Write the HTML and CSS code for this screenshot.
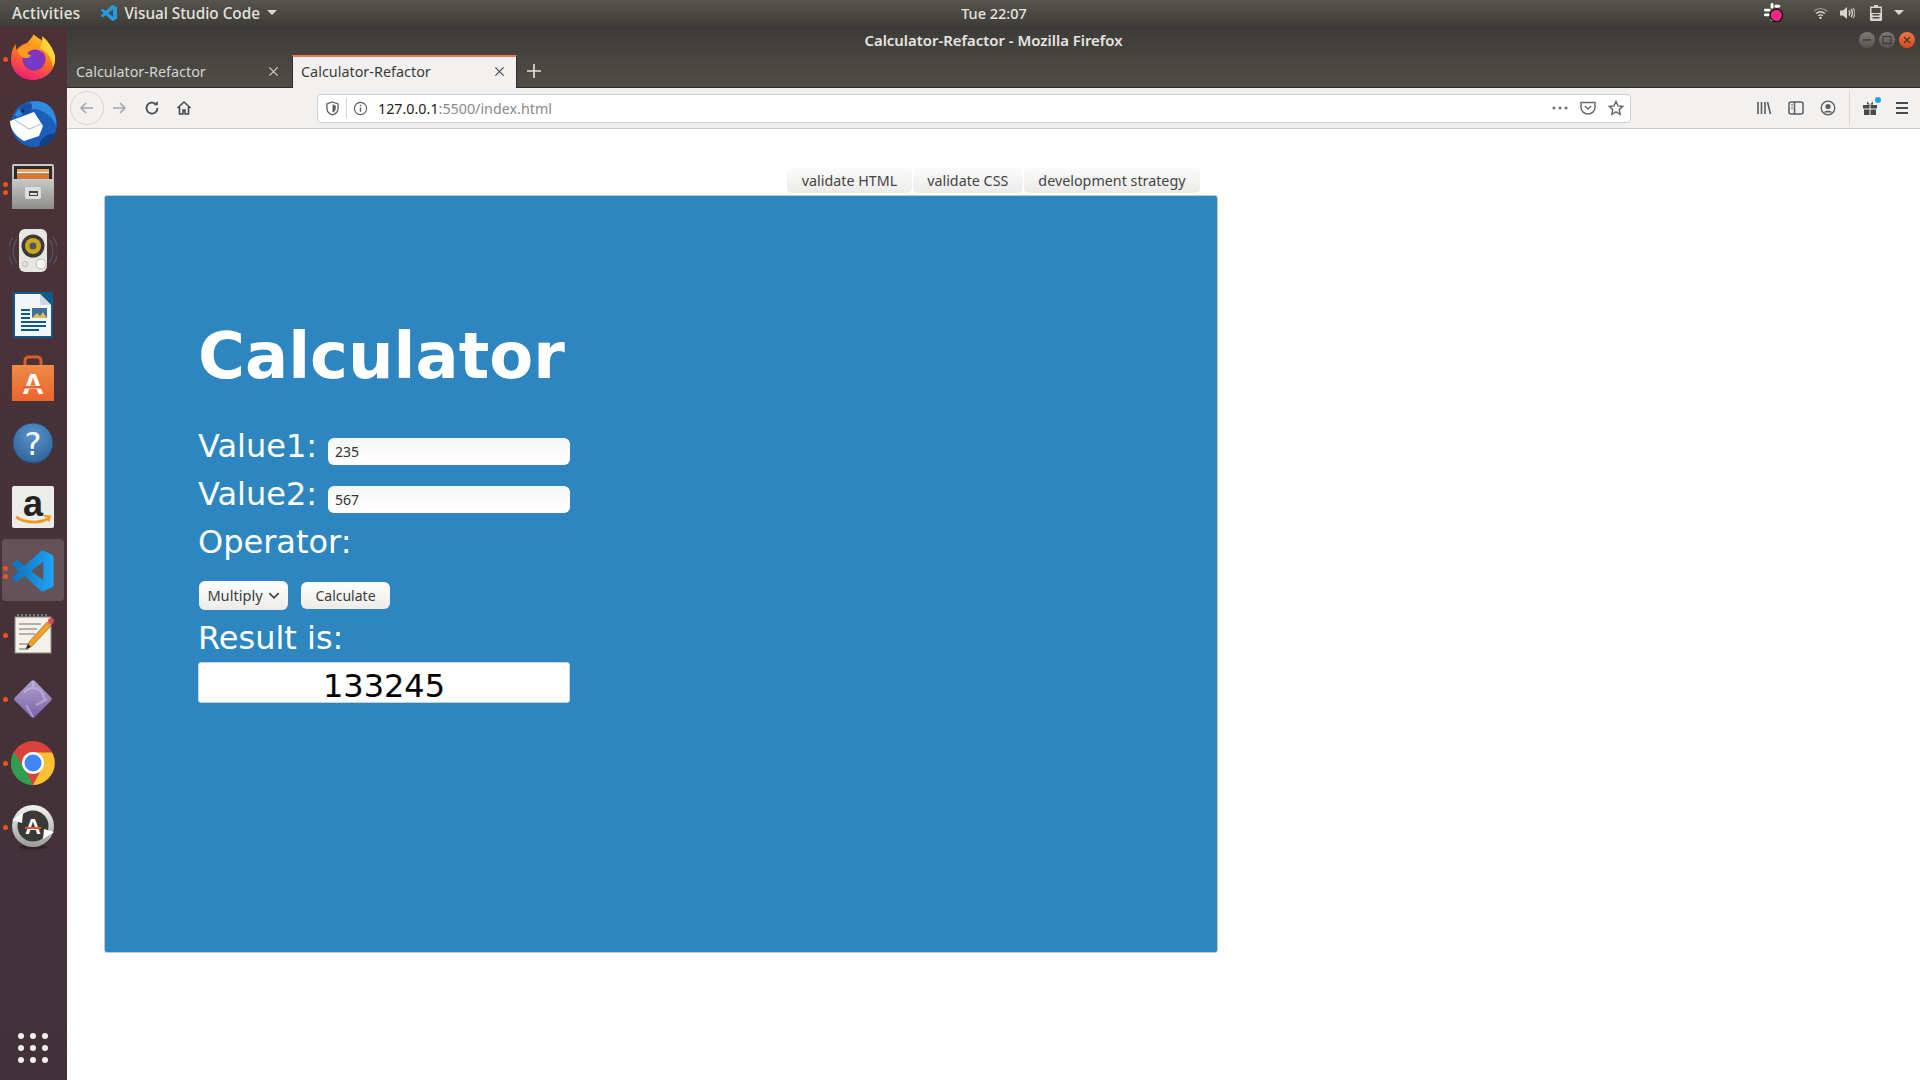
FILE: index.html
```html
<!DOCTYPE html>
<html lang="en">
<head>
<meta charset="utf-8">
<title>Calculator-Refactor - Mozilla Firefox</title>
<link rel="stylesheet" href="styles.css">
</head>
<body>
<svg class="defs" width="0" height="0" aria-hidden="true">
  <defs>
    <path id="vsc" d="M23.15 2.587L18.21.21a1.494 1.494 0 0 0-1.705.29l-9.46 8.63-4.12-3.128a.999.999 0 0 0-1.276.057L.327 7.261A1 1 0 0 0 .326 8.74L3.899 12 .326 15.26a1 1 0 0 0 .001 1.479L1.65 17.94a.999.999 0 0 0 1.276.057l4.12-3.128 9.46 8.63a1.492 1.492 0 0 0 1.704.29l4.942-2.377A1.5 1.5 0 0 0 24 20.06V3.939a1.5 1.5 0 0 0-.85-1.352zm-5.146 14.861L10.826 12l7.178-5.448v10.896z"/>
    <linearGradient id="ffg" x1="0.7" y1="0" x2="0.3" y2="1"><stop offset="0" stop-color="#ffc627"/><stop offset=".45" stop-color="#ff7a1a"/><stop offset="1" stop-color="#f0167c"/></linearGradient>
    <radialGradient id="ffp" cx=".45" cy=".6" r=".6"><stop offset="0" stop-color="#6a3fd0"/><stop offset="1" stop-color="#8f2fb5"/></radialGradient>
    <linearGradient id="grey" x1="0" y1="0" x2="0" y2="1"><stop offset="0" stop-color="#c9c9c7"/><stop offset="1" stop-color="#8d8d8b"/></linearGradient>
    <linearGradient id="bag" x1="0" y1="0" x2="0" y2="1"><stop offset="0" stop-color="#ef8a47"/><stop offset="1" stop-color="#e9652c"/></linearGradient>
    <radialGradient id="help" cx=".5" cy=".3" r=".8"><stop offset="0" stop-color="#5a93c7"/><stop offset="1" stop-color="#2c5f94"/></radialGradient>
    <linearGradient id="dia" x1="0" y1="0" x2="1" y2="1"><stop offset="0" stop-color="#b0a2d2"/><stop offset="1" stop-color="#7a63a6"/></linearGradient>
    <linearGradient id="ring" x1="0" y1="0" x2="0" y2="1"><stop offset="0" stop-color="#f4f4f2"/><stop offset="1" stop-color="#9a9a98"/></linearGradient>
    <linearGradient id="vscd" x1="0" y1="0" x2="1" y2="0"><stop offset="0" stop-color="#0d72bd"/><stop offset="1" stop-color="#1fa4f4"/></linearGradient>
  </defs>
</svg>

<header class="topbar">
  <div class="top-left">
    <span class="top-item">Activities</span>
    <span class="top-app">
      <svg class="ic-16" viewBox="0 0 24 24"><use href="#vsc" fill="#2a9ae0"/></svg>
      <span>Visual Studio Code</span>
      <i class="caret"></i>
    </span>
  </div>
  <div class="top-clock">Tue 22:07</div>
  <div class="top-right">
    <svg class="tray-slack" viewBox="0 0 22 22">
      <g fill="#fff"><rect x="8" y="1" width="3" height="6" rx="1.5"/><rect x="1" y="7" width="7" height="3" rx="1.5"/><rect x="1" y="12" width="6" height="3" rx="1.5"/><rect x="8" y="14" width="3" height="6" rx="1.5"/><rect x="12" y="3" width="6" height="3" rx="1.5"/></g>
      <circle cx="14" cy="14" r="6.5" fill="#f0287d" stroke="#111" stroke-width="1.2"/>
    </svg>
    <svg class="tray-wifi" viewBox="0 0 16 14" fill="none" stroke="#d6d5d1" stroke-width="1.5"><path d="M1 5c4-3.6 10-3.6 14 0" opacity=".55"/><path d="M3.2 7.6c3-2.5 6.6-2.5 9.6 0"/><path d="M5.5 10c1.5-1.2 3.5-1.2 5 0"/><circle cx="8" cy="12.2" r="1.2" fill="#eee" stroke="none"/></svg>
    <svg class="tray-vol" viewBox="0 0 16 14" fill="none" stroke="#d6d5d1" stroke-width="1.4"><path d="M1 4.5h3L8 1v12L4 9.5H1z" fill="#d6d5d1" stroke="none"/><path d="M10 4.5c1 1.5 1 3.5 0 5"/><path d="M12 3c1.8 2.5 1.8 5.5 0 8"/><path d="M14 1.8c2.3 3.2 2.3 7.2 0 10.4" opacity=".7"/></svg>
    <svg class="tray-bat" viewBox="0 0 12 16"><path d="M4 0h4v1.5h3a1 1 0 0 1 1 1V15a1 1 0 0 1-1 1H1a1 1 0 0 1-1-1V2.5a1 1 0 0 1 1-1h3z" fill="#d6d5d1"/><rect x="1.5" y="3" width="9" height="5" fill="#4a4842"/><rect x="2.5" y="9" width="7" height="1.5" fill="#4a4842"/><rect x="2.5" y="12" width="7" height="1.5" fill="#4a4842"/></svg>
    <i class="caret"></i>
  </div>
</header>

<div class="desktop">
  <nav class="dock">
    <div class="dock-item dock-first"><span class="pip"></span>
      <svg class="dock-icon" viewBox="0 0 48 48">
        <path d="M24 46C11 46 1.5 36.5 2 24 2.3 18 4 13.5 7 10c-.3 2.5 0 4.5 1 6 2-3.5 6-6 10-7 3-3 5-5.5 6.5-8.5C28 3 30 5 33 6c-.5 1 0 1.5.5 2.5C41 12 46 18 46 25c0 12-10 21-22 21z" fill="url(#ffg)"/>
        <path d="M33 2c5 4 11 11 13 20 .4 4-.5 8-2 11-1-8-5-15-13-19 2-4 3-8 2-12z" fill="#ffd43a"/>
        <circle cx="25" cy="25" r="11.5" fill="url(#ffp)"/>
        <path d="M8 16c4-4 9-5.5 14-5 6 .5 10 3.5 12 8-3-3-6-4-9-3.5-3 .4-5 1.5-6.5 3.5.5 1.5 2 2 3.5 2.2-1.5 3-5 3.5-8 2-3-1.5-5-4-6-7z" fill="#ff9a1f"/>
      </svg>
    </div>
    <div class="dock-item">
      <svg class="dock-icon" viewBox="0 0 48 48">
        <circle cx="25" cy="25" r="23" fill="#1c5fb8"/>
        <path d="M6 16C11 5 24-1 36 4c8 4 12 13 11 23-3-8-8-12-14-15-4-2-8-3-11-1L8 18z" fill="#2f8be0"/>
        <path d="M10 10c2-3 6-6 10-6 2 0 3 1 3 3l-1 6-8 3z" fill="#1a4fa6"/>
        <path d="M30 48c8-1 14-6 17-14l-9 2-6 5z" fill="#123f85"/>
        <path d="M1 22l24-9 9 14-4 10-15 5C7 38 1 30 1 22z" fill="#fff"/>
        <path d="M6 21l14 9 12-5" fill="none" stroke="#bcc5d0" stroke-width="1.2"/>
        <circle cx="14" cy="12" r="1.5" fill="#1a2a44"/>
      </svg>
    </div>
    <div class="dock-item"><span class="pip pip-a"></span><span class="pip pip-b"></span>
      <svg class="dock-icon" viewBox="0 0 48 48">
        <rect x="3" y="1" width="42" height="45" rx="2" fill="url(#grey)"/>
        <rect x="5" y="3" width="38" height="14" fill="#2a2a2a"/>
        <rect x="8" y="6" width="32" height="3" fill="#f5a35c"/>
        <rect x="8" y="9" width="32" height="1.5" fill="#fff"/>
        <rect x="8" y="10.5" width="32" height="6.5" fill="#d87834"/>
        <rect x="3" y="16" width="42" height="30" rx="1" fill="url(#grey)"/>
        <rect x="16" y="24" width="16" height="12" rx="2" fill="#dedede"/>
        <rect x="20" y="28" width="9" height="5" fill="#444"/>
        <rect x="21" y="30" width="7" height="2" fill="#ddd"/>
      </svg>
    </div>
    <div class="dock-item">
      <svg class="dock-icon" viewBox="0 0 48 48">
        <path d="M8 12c-5 7-5 17 0 24M4 10c-6 9-6 19 0 28M40 12c5 7 5 17 0 24M44 10c6 9 6 19 0 28" fill="none" stroke="#5f6f85" stroke-width="1.3" opacity=".55"/>
        <rect x="10" y="2" width="28" height="43" rx="6" fill="#e6e6e2"/>
        <circle cx="24" cy="19" r="11.5" fill="#3a3a38"/>
        <circle cx="24" cy="19" r="8" fill="#c8a820"/>
        <circle cx="24" cy="19" r="3.5" fill="#555"/>
        <circle cx="32" cy="37" r="5" fill="#f4f4f2" stroke="#bbb"/>
        <circle cx="16" cy="37" r="2.5" fill="none" stroke="#bbb"/>
      </svg>
    </div>
    <div class="dock-item">
      <svg class="dock-icon" viewBox="0 0 48 48">
        <path d="M4 1h40v46H4z" fill="#0f5a8a"/>
        <path d="M6 3h25l11 11v31H6z" fill="#f3f5f6"/>
        <path d="M31 3l11 11H31z" fill="#cfd8de"/>
        <g fill="#0f5a8a"><rect x="12" y="18" width="9" height="2"/><rect x="12" y="22" width="9" height="2"/><rect x="12" y="26" width="9" height="2"/><rect x="12" y="30" width="25" height="2"/><rect x="12" y="34" width="25" height="2"/><rect x="12" y="38" width="18" height="2"/></g>
        <rect x="23" y="17" width="15" height="10" fill="#3d6f99"/>
        <path d="M23 27l5-5 3 3 3-4 4 6z" fill="#e3b95f"/>
      </svg>
    </div>
    <div class="dock-item">
      <svg class="dock-icon" viewBox="0 0 48 48">
        <path d="M16 12V6c0-3 2-4 4-4h8c2 0 4 1 4 4v6" fill="none" stroke="#d85f26" stroke-width="3"/>
        <rect x="3" y="10" width="42" height="36" fill="url(#bag)"/>
        <text class="ic-bag" x="24" y="39" text-anchor="middle">A</text>
        <rect x="14" y="31" width="20" height="2.5" fill="#e9652c"/>
      </svg>
    </div>
    <div class="dock-item">
      <svg class="dock-icon" viewBox="0 0 48 48">
        <circle cx="24" cy="24" r="20" fill="url(#help)" stroke="#1f4a78"/>
        <text class="ic-help" x="24" y="36" text-anchor="middle">?</text>
      </svg>
    </div>
    <div class="dock-item">
      <svg class="dock-icon" viewBox="0 0 48 48">
        <rect x="3" y="3" width="42" height="42" rx="2" fill="#ececea"/>
        <text class="ic-amz" x="24" y="33" text-anchor="middle">a</text>
        <path d="M7 34c9 6 24 7 33 1" fill="none" stroke="#f29a1f" stroke-width="2.8"/>
        <path d="M35 33l6 .5-1.5 5" fill="none" stroke="#f29a1f" stroke-width="2"/>
      </svg>
    </div>
    <div class="dock-item dock-active"><span class="pip pip-a"></span><span class="pip pip-b"></span>
      <svg class="dock-icon" viewBox="-2 -2 28 28"><use href="#vsc" fill="url(#vscd)"/></svg>
    </div>
    <div class="dock-item"><span class="pip"></span>
      <svg class="dock-icon" viewBox="0 0 48 48">
        <rect x="6" y="6" width="36" height="36" fill="#f2f2ea" stroke="#8a8a80"/>
        <path d="M9 6V3M13 6V3M17 6V3M21 6V3M25 6V3M29 6V3M33 6V3M37 6V3" stroke="#777" stroke-width="2"/>
        <path d="M10 13h22M10 18h18M10 23h16M10 33h14M10 38h10" stroke="#9a9a92" stroke-width="1.5"/>
        <path d="M17 38l3-7L38 11l4 4-19 20z" fill="#f2a12b" stroke="#8a5a10" stroke-width=".6"/>
        <circle cx="42" cy="10" r="3" fill="#d94a4a"/>
        <path d="M17 38l2-5 3 3z" fill="#222"/>
      </svg>
    </div>
    <div class="dock-item"><span class="pip"></span>
      <svg class="dock-icon" viewBox="0 0 48 48">
        <rect x="10" y="10" width="28" height="28" rx="3" transform="rotate(45 24 24)" fill="url(#dia)"/>
        <path d="M24 6l0 6M35 24a11 11 0 0 0-11-11M24 13a11 11 0 0 0-9 5M17 30l7 12M27 30l11-6" fill="none" stroke="#c9c0de" stroke-width="2" opacity=".6"/>
      </svg>
    </div>
    <div class="dock-item"><span class="pip"></span>
      <svg class="dock-icon" viewBox="0 0 48 48">
        <circle cx="24" cy="24" r="22" fill="#d8423a"/>
        <path d="M24 13.5H43A22 22 0 0 1 24 46L33 29z" fill="#f8c233"/>
        <path d="M24 46A22 22 0 0 1 5 13L15 29z" fill="#2f9e50"/>
        <circle cx="24" cy="24" r="11" fill="#fff"/>
        <circle cx="24" cy="24" r="8.5" fill="#4285f4"/>
      </svg>
    </div>
    <div class="dock-item"><span class="pip"></span>
      <svg class="dock-icon" viewBox="0 0 48 48">
        <ellipse cx="24" cy="44" rx="14" ry="2.5" fill="#2a2024" opacity=".7"/>
        <circle cx="24" cy="23" r="21" fill="url(#ring)"/>
        <circle cx="24" cy="23" r="15.5" fill="#3a3936"/>
        <text class="ic-upd" x="24" y="31" text-anchor="middle">A</text>
        <rect x="16" y="24" width="16" height="2" fill="#e9552a"/>
        <path d="M3 17l11-7-1 10zM45 29l-11 7 1-10z" fill="#fff"/>
      </svg>
    </div>
    <div class="dock-spacer"></div>
    <div class="dock-apps">
      <i></i><i></i><i></i><i></i><i></i><i></i><i></i><i></i><i></i>
    </div>
  </nav>

  <div class="browser">
    <div class="titlebar">
      <span class="title">Calculator-Refactor - Mozilla Firefox</span>
      <div class="wm">
        <span class="wm-btn"><svg viewBox="0 0 16 16"><path d="M4 8h8" stroke="#3c3b37" stroke-width="1.5"/></svg></span>
        <span class="wm-btn"><svg viewBox="0 0 16 16"><rect x="4" y="4.5" width="8" height="7" fill="none" stroke="#3c3b37" stroke-width="1.2"/></svg></span>
        <span class="wm-btn wm-close"><svg viewBox="0 0 16 16"><path d="M5 5l6 6M11 5l-6 6" stroke="#3c3b37" stroke-width="1.3"/></svg></span>
      </div>
    </div>
    <div class="tabstrip">
      <div class="tab">
        <span class="tab-label">Calculator-Refactor</span>
        <svg class="tab-x" viewBox="0 0 12 12"><path d="M1.5 1.5l9 9M10.5 1.5l-9 9" stroke="#d2d1cd" stroke-width="1.3"/></svg>
      </div>
      <div class="tab tab-active">
        <span class="tab-label">Calculator-Refactor</span>
        <svg class="tab-x" viewBox="0 0 12 12"><path d="M1.5 1.5l9 9M10.5 1.5l-9 9" stroke="#4a4a4a" stroke-width="1.3"/></svg>
      </div>
      <svg class="tab-new" viewBox="0 0 14 14"><path d="M7 0v14M0 7h14" stroke="#e6e5e1" stroke-width="1.6"/></svg>
    </div>
    <div class="toolbar">
      <span class="back"><svg viewBox="0 0 16 16" fill="none" stroke="#a5a5a5" stroke-width="1.6"><path d="M14 8H2M7 3L2 8l5 5"/></svg></span>
      <svg class="tb-icon tb-fwd" viewBox="0 0 16 16" fill="none" stroke="#a5a5a5" stroke-width="1.6"><path d="M2 8h12M9 3l5 5-5 5"/></svg>
      <svg class="tb-icon tb-reload" viewBox="0 0 16 16" fill="none" stroke="#4a4a4a" stroke-width="1.8"><path d="M13.5 8a5.5 5.5 0 1 1-1.8-4"/><path d="M13.8 1v4.3H9.5" fill="#4a4a4a" stroke="none"/></svg>
      <svg class="tb-icon tb-home" viewBox="0 0 16 16" fill="none" stroke="#4a4a4a" stroke-width="1.6"><path d="M1.5 8L8 2l6.5 6M3.5 7v7h3.500v-4h2v4h3.500V7"/></svg>
      <div class="urlbar">
        <svg class="url-shield" viewBox="0 0 14 16" fill="none" stroke="#5c5c5c" stroke-width="1.4"><path d="M7 1l6 2v5c0 3.5-3 6-6 7-3-1-6-3.5-6-7V3z"/><path d="M7 3.5v9c2-.8 3.5-2.5 3.5-4.5V5z" fill="#5c5c5c" stroke="none"/></svg>
        <i class="url-sep"></i>
        <svg class="url-info" viewBox="0 0 16 16" fill="none" stroke="#5c5c5c" stroke-width="1.2"><circle cx="8" cy="8" r="6.5"/><path d="M8 7v4.5" stroke-width="1.5"/><circle cx="8" cy="4.8" r=".9" fill="#5c5c5c" stroke="none"/></svg>
        <span class="url-text"><b>127.0.0.1</b>:5500/index.html</span>
        <svg class="url-dots" viewBox="0 0 16 4" fill="#737373"><circle cx="2" cy="2" r="1.6"/><circle cx="8" cy="2" r="1.6"/><circle cx="14" cy="2" r="1.6"/></svg>
        <svg class="url-act" viewBox="0 0 16 16" fill="none" stroke="#6a6a6a" stroke-width="1.5"><path d="M1 2.5h14v5a7 6.5 0 0 1-14 0z"/><path d="M4.8 6l3.2 3 3.2-3"/></svg>
        <svg class="url-act" viewBox="0 0 16 16" fill="none" stroke="#6a6a6a" stroke-width="1.5"><path d="M8 1.5l2 4.4 4.800.5-3.600 3.200 1 4.700L8 11.900 3.800 14.300l1-4.700L1.200 6.400 6 5.900z"/></svg>
      </div>
      <div class="tb-right">
        <svg class="tb-icon" viewBox="0 0 16 16" fill="none" stroke="#5c5c5c" stroke-width="1.6"><path d="M2 2v12M5.5 2v12M9 2v12M11.5 2l3 12"/></svg>
        <svg class="tb-icon" viewBox="0 0 16 16" fill="none" stroke="#5c5c5c" stroke-width="1.5"><rect x="1" y="2" width="14" height="12" rx="2"/><path d="M6.5 2v12" /><path d="M3 5h2M3 8h2" stroke-width="1.2"/></svg>
        <svg class="tb-icon" viewBox="0 0 16 16" fill="none" stroke="#5c5c5c" stroke-width="1.3"><circle cx="8" cy="8" r="6.8"/><circle cx="8" cy="6.5" r="2.6" fill="#5c5c5c" stroke="none"/><path d="M3.5 12.5c1.5-2.5 7.5-2.5 9 0" fill="#5c5c5c" stroke="none"/></svg>
        <i class="tb-sep"></i>
        <span class="gift">
          <svg class="tb-icon" viewBox="0 0 16 16" fill="#4a4a4a"><rect x="1" y="5" width="6.5" height="3.5"/><rect x="8.5" y="5" width="6.5" height="3.5"/><rect x="2" y="9.5" width="5.5" height="5.5"/><rect x="8.5" y="9.5" width="5.5" height="5.5"/><path d="M5 1.5l3 3 3-3v3H5z"/></svg>
          <i class="gift-dot"></i>
        </span>
        <svg class="tb-icon" viewBox="0 0 16 16" stroke="#4a4a4a" stroke-width="1.8"><path d="M2 3h12M2 8h12M2 13h12"/></svg>
      </div>
    </div>

    <main class="page">
      <div class="content">
        <div class="links">
          <a class="link">validate HTML</a>
          <a class="link">validate CSS</a>
          <a class="link">development strategy</a>
        </div>
        <section class="panel">
          <h1 class="heading">Calculator</h1>
          <div class="field"><label class="lbl">Value1:</label><span class="input">235</span></div>
          <div class="field"><label class="lbl">Value2:</label><span class="input">567</span></div>
          <div class="field"><label class="lbl">Operator:</label></div>
          <div class="controls">
            <span class="select">Multiply<svg viewBox="0 0 10 6" fill="none" stroke="#444" stroke-width="1.5"><path d="M1 1l4 4 4-4"/></svg></span>
            <span class="btn">Calculate</span>
          </div>
          <div class="lbl result-lbl">Result is:</div>
          <div class="result">133245</div>
        </section>
      </div>
    </main>
  </div>
</div>
</body>
</html>
```
FILE: styles.css
```css
* { box-sizing: border-box; }
html, body { margin: 0; padding: 0; width: 1920px; height: 1080px; overflow: hidden; }
body { font-family: "Noto Sans", sans-serif; background: #fff; display: flex; flex-direction: column; }
.defs { position: absolute; }

.topbar { height: 27px; flex: none; display: flex; align-items: center; background: linear-gradient(#57544d, #3d3c37); color: #e4e3df; font-size: 15.3px; font-weight: 500; padding-bottom: 2px; }
.top-left { flex: 0 0 958px; display: flex; align-items: center; padding-left: 12px; gap: 21px; }
.top-item { letter-spacing: .25px; }
.top-app { display: flex; align-items: center; gap: 7px; }
.ic-16 { width: 16px; height: 16px; }
.caret { width: 0; height: 0; border-left: 5px solid transparent; border-right: 5px solid transparent; border-top: 5px solid #d8d7d3; }
.top-clock { flex: 0 0 72px; text-align: center; font-size: 14.5px; white-space: nowrap; }
.top-right { flex: 1; display: flex; align-items: center; justify-content: flex-end; padding-right: 16px; }
.tray-slack { width: 21px; height: 21px; margin-right: 29px; }
.tray-wifi { width: 15px; height: 14px; margin-right: 11px; }
.tray-vol { width: 16px; height: 14px; margin-right: 15px; }
.tray-bat { width: 12px; height: 16px; margin-right: 12px; }

.desktop { flex: 1; display: flex; min-height: 0; }
.dock { width: 67px; flex: none; background: linear-gradient(#4c3238, #41323a); display: flex; flex-direction: column; align-items: stretch; padding-right: 1px; }
.dock-item { position: relative; height: 64px; flex: none; display: flex; align-items: center; justify-content: center; }
.dock-first .dock-icon { margin-top: -2px; }
.dock-icon { width: 48px; height: 48px; display: block; }
.dock-active::before { content: ""; position: absolute; left: 2px; right: 2px; top: 0; bottom: 2px; background: rgba(255,255,255,.16); border-radius: 4px; }
.dock-active .dock-icon { position: relative; }
.pip { position: absolute; left: 3px; top: 30px; width: 5px; height: 5px; border-radius: 50%; background: #e95420; }
.pip-a { top: 27px; }
.pip-b { top: 35px; }
.dock-spacer { flex: 1; }
.dock-apps { display: grid; grid-template-columns: repeat(3, 6px); gap: 6px; justify-content: center; padding-bottom: 17px; }
.dock-apps i { width: 6px; height: 6px; border-radius: 50%; background: #f1efec; }

.browser { flex: 1; display: flex; flex-direction: column; min-width: 0; }
.titlebar { height: 28px; flex: none; position: relative; display: flex; align-items: center; justify-content: center; background: linear-gradient(#3c3b37, #46443f); padding-bottom: 2px; }
.title { color: #e6e5e1; font-size: 14.9px; font-weight: 600; }
.wm { position: absolute; right: 5px; top: 5px; display: flex; gap: 4px; }
.wm-btn { width: 16px; height: 16px; border-radius: 50%; background: linear-gradient(#7b7a75, #55544f); display: block; }
.wm-btn svg { display: block; width: 16px; height: 16px; }
.wm-close { background: linear-gradient(#f2774a, #d9491a); }

.tabstrip { height: 33px; flex: none; display: flex; align-items: stretch; padding-left: 1px; background: linear-gradient(#46443f, #504e47); box-shadow: inset 0 -1px 0 #2e2d2a; }
.tab { width: 224px; display: flex; align-items: center; justify-content: space-between; padding: 0 13px 0 8px; color: #d6d5d1; font-size: 14.4px; }
.tab-active { width: 225px; padding-right: 11px; background: #f2f1f0; color: #3b3b3b; border-top: 2px solid #f0764a; border-left: 1px solid #2e2d2a; border-right: 1px solid #2e2d2a; }
.tab-active .tab-label { margin-top: -2px; }
.tab-active .tab-x { margin-top: -2px; }
.tab-x { width: 11px; height: 11px; }
.tab-new { width: 14px; height: 14px; margin: 9px 0 0 10px; }

.toolbar { height: 41px; flex: none; display: flex; align-items: center; background: #f2f1f0; border-bottom: 1px solid #cac8c5; padding-left: 3px; }
.back { width: 34px; height: 34px; border: 1px solid #d6d5d3; border-radius: 50%; display: flex; align-items: center; justify-content: center; }
.back svg { width: 16px; height: 16px; }
.tb-icon { width: 16px; height: 16px; flex: none; display: block; }
.tb-fwd { margin-left: 7px; }
.tb-reload { margin-left: 17px; }
.tb-home { margin-left: 16px; }
.urlbar { margin-left: 125px; width: 1314px; height: 29px; background: #fff; border: 1px solid #d0cfcd; border-radius: 4px; display: flex; align-items: center; padding: 0 6px 0 8px; color: #8a8a8a; font-size: 14.3px; }
.url-shield { width: 13px; height: 15px; }
.url-sep { width: 1px; height: 20px; background: #d4d3d1; margin: 0 6px 0 7px; }
.url-info { width: 15px; height: 15px; margin-right: 10px; }
.url-text { flex: 1; }
.url-text b { font-weight: 400; color: #222; }
.url-dots { width: 16px; height: 4px; }
.url-act { width: 16px; height: 16px; margin-left: 12px; }
.tb-right { flex: 1; display: flex; align-items: center; padding-left: 125px; gap: 16px; }
.tb-sep { width: 1px; height: 34px; background: #d6d5d3; margin: 0 -4px 0 -3px; }
.gift { position: relative; display: block; }
.gift-dot { position: absolute; right: -3px; top: -3px; width: 6px; height: 6px; border-radius: 50%; background: #1ea1f2; }

.page { flex: 1; background: #fff; min-height: 0; padding: 39px 0 0 37px; }
.content { width: 1114px; }
.links { display: flex; justify-content: flex-end; gap: 1px; padding-right: 18px; height: 27px; }
.link { height: 25px; padding: 0 14.5px; display: flex; align-items: center; background: linear-gradient(#fbfbfb, #ecebe9); border-radius: 5px; color: #444; font-size: 14.3px; }
.panel { height: 758px; background: #2e86c1; border: 1px solid #c8c8c8; border-radius: 3px; padding: 122px 93px 0; color: #fff; font-family: "DejaVu Sans", sans-serif; }
.heading { margin: 0 0 29px; font-size: 64px; font-weight: 700; line-height: 76px; }
.field { display: flex; align-items: center; height: 48px; width: 372px; }
.field .lbl { margin-bottom: 2px; }
.lbl { font-size: 32px; line-height: 46px; flex: none; }
.input { margin-left: 11px; margin-top: 8px; width: 242px; height: 27px; background: linear-gradient(#f6f6f6, #fff); border-radius: 6px; color: #333; font: 14px "Noto Sans", sans-serif; display: flex; align-items: center; padding-left: 7px; }
.controls { display: flex; align-items: center; gap: 13px; padding: 9px 0 0 1px; height: 47px; }
.select { width: 89px; height: 29px; display: flex; align-items: center; justify-content: center; gap: 5px; background: linear-gradient(#fff, #ecebe9); border-radius: 6px; color: #3c3c3c; font: 14.6px "Noto Sans", sans-serif; }
.select svg { width: 12px; height: 7px; }
.btn { width: 89px; height: 27px; display: flex; align-items: center; justify-content: center; background: linear-gradient(#fff, #ecebe9); border-radius: 6px; color: #3c3c3c; font: 14px "Noto Sans", sans-serif; }
.result-lbl { display: block; height: 48px; line-height: 48px; }
.result { width: 372px; height: 41px; background: #fff; border: 1px solid #cfcfcf; border-radius: 3px; color: #000; font-size: 32px; line-height: 47px; text-align: center; }

.ic-bag { font: 700 30px "Liberation Sans", sans-serif; fill: #fff; }
.ic-help { font: 400 32px "DejaVu Sans", sans-serif; fill: #fff; }
.ic-amz { font: 700 36px "Liberation Sans", sans-serif; fill: #222; }
.ic-upd { font: 700 22px "Liberation Sans", sans-serif; fill: #fff; }
```
